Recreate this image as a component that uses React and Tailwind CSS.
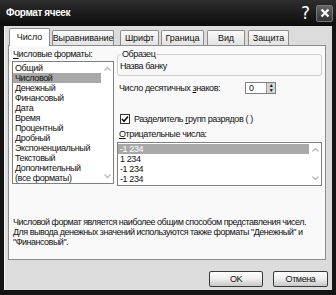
import React from 'react';

const formats = [
  'Общий',
  'Числовой',
  'Денежный',
  'Финансовый',
  'Дата',
  'Время',
  'Процентный',
  'Дробный',
  'Экспоненциальный',
  'Текстовый',
  'Дополнительный',
  '(все форматы)',
];

const negatives = ['-1 234', '1 234', '-1 234', '-1 234'];

const tabs = [
  { label: 'Выравнивание', w: 'w-[62px]', ml: 'ml-[2px]' },
  { label: 'Шрифт', w: 'w-[39px]', ml: 'ml-[6px]' },
  { label: 'Граница', w: 'w-[43px]', ml: 'ml-[2px]' },
  { label: 'Вид', w: 'w-[38px]', ml: 'ml-[3px]' },
  { label: 'Защита', w: 'w-[41px]', ml: 'ml-[3px]' },
];

function Arrow({ up }) {
  return (
    <svg width="7" height="5" viewBox="0 0 7 5" className="block">
      <path
        d={up ? 'M0.5 4.5 L3.5 1.5 L6.5 4.5' : 'M0.5 0.5 L3.5 3.5 L6.5 0.5'}
        fill="none"
        stroke="#b8b8b8"
        strokeWidth="1.3"
      />
    </svg>
  );
}

export default function App() {
  return (
    <div className="w-[336px] h-[295px] flex flex-col bg-[#141414] font-['Liberation_Sans',sans-serif] text-[9px] tracking-[-0.4px] text-[#111] leading-none">
      {/* title bar */}
      <div className="h-[26px] flex items-center justify-between pl-[6px] pr-[3px] bg-gradient-to-b from-[#2e2e2e] to-[#0c0c0c]">
        <span className="text-white font-bold text-[10px] tracking-[-0.4px]">Формат ячеек</span>
        <div className="flex items-center gap-[6px]">
          <span className="text-white text-[17px] tracking-normal font-['DejaVu_Sans',sans-serif]">?</span>
          <div className="w-[17px] h-[17px] rounded-[2px] border border-[#777] bg-gradient-to-b from-[#666] to-[#333] flex items-center justify-center">
            <svg width="10" height="10" viewBox="0 0 10 10">
              <path d="M1.5 1.5 L8.5 8.5 M8.5 1.5 L1.5 8.5" stroke="white" strokeWidth="2.2" />
            </svg>
          </div>
        </div>
      </div>

      {/* body */}
      <div className="flex-1 mx-[4px] mb-[5px] bg-[#dcdcdc] border-l border-[#f4f4f4] flex flex-col px-[3px] pt-[3px]">
        {/* tabs */}
        <div className="flex items-end h-[16px] relative z-10 tracking-[-0.1px]">
          <div className="w-[41px] h-[18px] ml-[1px] -mb-px bg-white border border-b-0 border-[#8c8c8c] rounded-t-[2px] flex items-center justify-center">
            Число
          </div>
          {tabs.map((t) => (
            <div
              key={t.label}
              className={`${t.w} ${t.ml} h-[15px] bg-gradient-to-b from-[#fbfbfb] to-[#e2e2e2] border border-b-0 border-[#8c8c8c] rounded-t-[2px] flex items-center justify-center`}
            >
              {t.label}
            </div>
          ))}
        </div>

        {/* panel */}
        <div className="w-[318px] h-[215px] bg-[#f9f9f9] border border-[#8c8c8c] flex flex-col px-[3px] pt-[4px]">
          <div className="flex">
            {/* left column */}
            <div className="w-[102px] flex flex-col">
              <span className="pl-px">
                <span className="underline">Ч</span>исловые форматы:
              </span>
              <div className="mt-[2px] h-[123px] bg-white border border-[#7f7f7f] flex">
                <div className="flex-1 flex flex-col pt-px">
                  {formats.map((f) => (
                    <div
                      key={f}
                      className={`h-[10px] pl-[2px] flex items-center ${
                        f === 'Числовой' ? 'bg-[#a8a8a8] text-[#111]' : ''
                      }`}
                    >
                      {f}
                    </div>
                  ))}
                </div>
                <div className="w-[12px] flex flex-col justify-between items-center py-[4px]">
                  <Arrow up />
                  <Arrow />
                </div>
              </div>
            </div>

            {/* right column */}
            <div className="flex-1 ml-[3px] flex flex-col">
              <div className="relative mt-[4px] h-[22px] border border-[#cfcfcf] rounded-[3px] pl-[2px] flex items-center">
                <span className="absolute -top-[5px] left-[3px] bg-[#f9f9f9] px-px">Образец</span>
                <span className="mt-[2px]">Назва банку</span>
              </div>
              <div className="flex items-center justify-between mt-[6px] pl-[2px] pr-[46px]">
                <span>
                  Число десятичных <span className="underline">з</span>наков:
                </span>
                <div className="w-[31px] h-[12px] bg-white border border-[#7f7f7f] flex">
                  <span className="flex-1 pl-[3px] flex items-center">0</span>
                  <div className="w-[9px] flex flex-col bg-[#d4d4d4] border-l border-[#999]">
                    <div className="flex-1 flex items-center justify-center text-[5px]">▲</div>
                    <div className="flex-1 flex items-center justify-center text-[5px]">▼</div>
                  </div>
                </div>
              </div>
              <div className="flex items-center mt-[20px] pl-[3px]">
                <div className="w-[10px] h-[10px] bg-white border border-[#333] flex items-center justify-center">
                  <svg width="8" height="8" viewBox="0 0 8 8">
                    <path d="M1 4 L3 6.3 L7 1.5" fill="none" stroke="#111" strokeWidth="1.6" />
                  </svg>
                </div>
                <span className="ml-[4px]">
                  Разделитель <span className="underline">г</span>рупп разрядов ( )
                </span>
              </div>
              <span className="mt-[6px] pl-[2px]">
                <span className="underline">О</span>трицательные числа:
              </span>
              <div className="mt-[3px] h-[44px] bg-white border border-[#7f7f7f] flex">
                <div className="flex-1 flex flex-col pt-px">
                  {negatives.map((n, i) => (
                    <div
                      key={i}
                      className={`h-[10px] pl-[2px] flex items-center ${
                        i === 0 ? 'bg-[#a9a9a9] text-white' : ''
                      }`}
                    >
                      {n}
                    </div>
                  ))}
                </div>
                <div className="w-[12px] flex flex-col justify-between items-center py-[4px]">
                  <Arrow up />
                  <Arrow />
                </div>
              </div>
            </div>
          </div>

          <p className="mt-[31px] pl-px leading-[10px] tracking-[-0.5px] whitespace-nowrap">
            Числовой формат является наиболее общим способом представления чисел.
            <br />
            Для вывода денежных значений используются также форматы "Денежный" и
            <br />
            "Финансовый".
          </p>
        </div>

        {/* buttons */}
        <div className="flex justify-end gap-[10px] mt-[11px] pr-[1px]">
          <button className="w-[54px] h-[16px] rounded-[2px] border border-[#3a3a3a] bg-gradient-to-b from-[#ffffff] via-[#eeeeee] to-[#c8c8c8] text-[9px]">
            OK
          </button>
          <button className="w-[55px] h-[16px] rounded-[2px] border border-[#3a3a3a] bg-gradient-to-b from-[#ffffff] via-[#eeeeee] to-[#c8c8c8] text-[9px]">
            Отмена
          </button>
        </div>
      </div>
    </div>
  );
}
